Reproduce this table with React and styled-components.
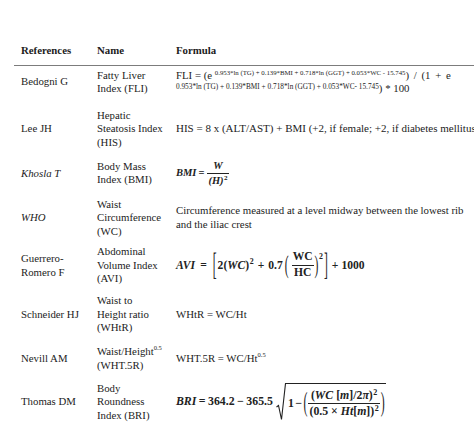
import React from "react";
import styled, { createGlobalStyle } from "styled-components";

const Global = createGlobalStyle`
  html, body { margin: 0; padding: 0; background: #fff; overflow: hidden; }
  body { font-family: "Liberation Serif", "Times New Roman", serif; color: #1c1c1c; }
`;

const Page = styled.div`
  width: 474px;
  height: 424px;
  box-sizing: border-box;
  padding: 36px 0 0 14px;
  overflow: hidden;
`;

const cols = "76px 79px 1fr";

const HeaderRow = styled.div`
  display: grid;
  grid-template-columns: ${cols};
  height: 29px;
  align-items: center;
  border-bottom: 1.5px solid #7c7c7c;
  font-weight: bold;
  font-size: 10.8px;
`;

const Row = styled.div`
  display: grid;
  grid-template-columns: ${cols};
  height: ${(p) => p.$h}px;
  padding-bottom: ${(p) => p.$pb || 0}px;
  box-sizing: border-box;
  align-items: center;
  font-size: 10.8px;
`;

const Cell = styled.div`
  padding-left: 7px;
  line-height: 13.5px;
  white-space: nowrap;
  font-style: ${(p) => (p.$italic ? "italic" : "normal")};
  font-size: ${(p) => (p.$size ? `${p.$size}px` : "inherit")};
`;

const Sup = styled.sup`
  font-size: ${(p) => p.$size || 7}px;
  vertical-align: ${(p) => p.$raise || 4}px;
  line-height: 0;
`;

const Wide = styled.span`
  word-spacing: ${(p) => p.$ws || 0}px;
`;

const Math = styled.span`
  display: inline-flex;
  align-items: center;
  font-weight: bold;
  font-size: ${(p) => p.$size || 11}px;
  white-space: nowrap;
  color: #222;
`;

const V = styled.span`
  font-style: italic;
`;

const Op = styled.span`
  margin: 0 ${(p) => p.$m ?? 3}px;
`;

const Frac = styled.span`
  display: inline-flex;
  flex-direction: column;
  align-items: center;
  margin: 0 1px;
  line-height: 1.1;
`;

const Num = styled.span`
  padding: 0 1px 1px;
  border-bottom: 1px solid #222;
  align-self: stretch;
  text-align: center;
`;

const Den = styled.span`
  padding: 1px 1px 0;
`;

const MSup = styled.span`
  display: inline-block;
  font-size: 0.68em;
  transform: translateY(${(p) => p.$up ?? -0.55}em);
  margin-left: 0.5px;
`;

const Big = styled.span`
  display: inline-block;
  font-weight: normal;
  transform: scaleY(${(p) => p.$s});
  margin: 0 ${(p) => p.$m ?? 1}px;
`;

const Root = styled.span`
  display: inline-flex;
  align-items: stretch;
  margin-left: 3px;
`;

const RootBody = styled.span`
  display: inline-flex;
  align-items: center;
  border-top: 1px solid #222;
  padding: 3px 1px 1px 2px;
`;

const RootSign = () => (
  <svg width="10" height="38" viewBox="0 0 10 38" style={{ display: "block" }}>
    <path d="M0.5 24 L2.5 22.5 L5.5 36.5 L9.5 0.5 L10 0.5" fill="none" stroke="#222" strokeWidth="1.1" />
  </svg>
);

const rows = [
  {
    ref: "Bedogni G",
    name: ["Fatty Liver", "Index (FLI)"],
    h: 40,
    pb: 8,
    formula: (
      <>
        FLI = (e{" "}
        <Sup $size={6.8} $raise={4}>
          0.953*ln (TG) + 0.139*BMI + 0.718*ln (GGT) + 0.053*WC - 15.745
        </Sup>
        <Wide $ws={2}>) / (1 + e</Wide>
        <br />
        <Sup $size={7.3} $raise={3}>
          0.953*ln (TG) + 0.139*BMI + 0.718*ln (GGT) + 0.053*WC- 15.745
        </Sup>
        ) * 100
      </>
    ),
  },
  {
    ref: "Lee JH",
    name: ["Hepatic", "Steatosis Index", "(HIS)"],
    h: 45.5,
    fsize: 11,
    formula: "HIS = 8 x (ALT/AST) + BMI (+2, if female; +2, if diabetes mellitus)",
  },
  {
    ref: "Khosla T",
    italic: true,
    name: ["Body Mass", "Index (BMI)"],
    h: 43.5,
    formula: (
      <Math $size={10.5}>
        <V>BMI</V>
        <Op $m={2}>=</Op>
        <Frac>
          <Num>
            <V>W</V>
          </Num>
          <Den>
            <V>(H)</V>
            <MSup>2</MSup>
          </Den>
        </Frac>
      </Math>
    ),
  },
  {
    ref: "WHO",
    italic: true,
    name: ["Waist", "Circumference", "(WC)"],
    h: 45.5,
    formula: (
      <>
        Circumference measured at a level midway between the lowest rib
        <br />
        and the iliac crest
      </>
    ),
  },
  {
    ref: ["Guerrero-", "Romero F"],
    name: ["Abdominal", "Volume Index", "(AVI)"],
    h: 50,
    formula: (
      <Math $size={11.6}>
        <V>AVI</V>
        <Op $m={5}>=</Op>
        <Big $s={2.7}>[</Big>
        2(<V>WC</V>)<MSup>2</MSup>
        <Op $m={4}>+</Op>0.7
        <Big $s={2.1} $m={2}>(</Big>
        <Frac>
          <Num>WC</Num>
          <Den>HC</Den>
        </Frac>
        <Big $s={2.1} $m={0}>)</Big>
        <MSup $up={-1.1}>2</MSup>
        <Big $s={2.7}>]</Big>
        <Op $m={3}>+</Op>1000
      </Math>
    ),
  },
  {
    ref: "Schneider HJ",
    name: ["Waist to", "Height ratio", "(WHtR)"],
    h: 47.5,
    formula: "WHtR = WC/Ht",
  },
  {
    ref: "Nevill AM",
    name: [
      <>
        Waist/Height<Sup $size={6.5} $raise={5}>0.5</Sup>
      </>,
      "(WHT.5R)",
    ],
    h: 41.5,
    formula: (
      <>
        WHT.5R = WC/Ht<Sup $size={6.5} $raise={5}>0.5</Sup>
      </>
    ),
  },
  {
    ref: "Thomas DM",
    name: ["Body", "Roundness", "Index (BRI)"],
    h: 44.5,
    formula: (
      <Math $size={11.8}>
        <V>BRI</V>
        <Op $m={2.5}>=</Op>364.2<Op $m={2.5}>−</Op>365.5
        <Root>
          <RootSign />
          <RootBody>
            1<Op $m={1.5}>−</Op>
            <Big $s={2.3} $m={0}>(</Big>
            <Frac>
              <Num>
                (<V>WC</V> [<V>m</V>]/2<V>π</V>)<MSup>2</MSup>
              </Num>
              <Den>
                (0.5 × <V>Ht</V>[<V>m</V>])<MSup>2</MSup>
              </Den>
            </Frac>
            <Big $s={2.3} $m={0}>)</Big>
          </RootBody>
        </Root>
      </Math>
    ),
  },
];

const lines = (v) =>
  Array.isArray(v)
    ? v.map((l, i) => (
        <React.Fragment key={i}>
          {i > 0 && <br />}
          {l}
        </React.Fragment>
      ))
    : v;

export default function App() {
  return (
    <>
      <Global />
      <Page>
        <HeaderRow>
          <Cell>References</Cell>
          <Cell>Name</Cell>
          <Cell>Formula</Cell>
        </HeaderRow>
        {rows.map((r, i) => (
          <Row key={i} $h={r.h} $pb={r.pb}>
            <Cell $italic={r.italic}>{lines(r.ref)}</Cell>
            <Cell>{lines(r.name)}</Cell>
            <Cell $size={r.fsize}>{r.formula}</Cell>
          </Row>
        ))}
      </Page>
    </>
  );
}
